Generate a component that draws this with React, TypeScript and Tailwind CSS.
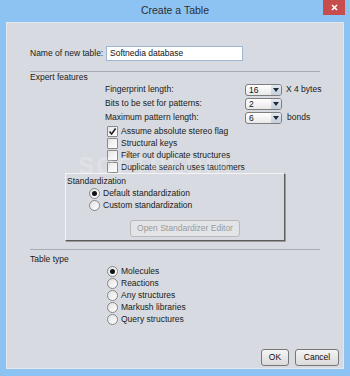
import React from "react";

const font = { fontFamily: '"Liberation Sans", Arial, sans-serif' };

function Combo({ value }: { value: string }) {
  return (
    <div className="flex h-[12px] w-[37px] items-stretch overflow-hidden rounded-[3px] border border-[#7d7d7d] bg-gradient-to-b from-[#ffffff] to-[#e9e9e9]">
      <div className="flex-1 pl-[3px] text-[8.5px] leading-[10px] text-[#111]">{value}</div>
      <div className="flex w-[10px] items-center justify-center bg-gradient-to-b from-[#e4e9f0] to-[#c5ceda]">
        <svg width="6" height="4" viewBox="0 0 6 4">
          <path d="M0 0 L6 0 L3 4 Z" fill="#1e2a38" />
        </svg>
      </div>
    </div>
  );
}

function Check({ checked, label }: { checked?: boolean; label: string }) {
  return (
    <div className="flex h-[12px] items-center">
      <div className="flex h-[11px] w-[11px] items-center justify-center rounded-[1px] border border-[#8a8a8a] bg-gradient-to-br from-[#e6e6e6] to-[#ffffff]">
        {checked && (
          <svg width="9" height="9" viewBox="0 0 9 9">
            <path d="M1.5 4.5 L3.6 7 L7.6 1.5" fill="none" stroke="#1d1d1d" strokeWidth="1.5" />
          </svg>
        )}
      </div>
      <span className="ml-[3px] text-[8.5px] leading-[12px] text-[#1a1a1a]">{label}</span>
    </div>
  );
}

function Radio({ checked, label }: { checked?: boolean; label: string }) {
  return (
    <div className="flex h-[12px] items-center">
      <div className="flex h-[11px] w-[11px] items-center justify-center rounded-full border border-[#878787] bg-gradient-to-br from-[#e2e2e2] to-[#ffffff]">
        {checked && <div className="h-[5px] w-[5px] rounded-full bg-[#111]" />}
      </div>
      <span className="ml-[3px] text-[8.5px] leading-[12px] text-[#1a1a1a]">{label}</span>
    </div>
  );
}

function Btn({ label, w, disabled }: { label: string; w: string; disabled?: boolean }) {
  return (
    <div
      className={`flex h-[17px] ${w} items-center justify-center rounded-[3px] border text-[8.5px] ${
        disabled
          ? "border-[#b9b9b9] bg-[#e3e4e7] text-[#9a9a9a]"
          : "border-[#777] bg-gradient-to-b from-[#f4f4f4] to-[#dadada] text-[#111]"
      }`}
    >
      {label}
    </div>
  );
}

export default function App() {
  return (
    <div className="relative flex h-[376px] w-[350px] flex-col bg-[#8cc3f3]" style={font}>
      {/* Title bar */}
      <div className="relative flex h-[22px] items-center justify-center">
        <span className="text-[10.5px] text-[#2e2e2e]">Create a Table</span>
        <div className="absolute right-[5px] top-0 flex h-[15px] w-[22px] items-center justify-center bg-[#c74d4d]">
          <svg width="7" height="7" viewBox="0 0 7 7">
            <path d="M1 1 L6 6 M6 1 L1 6" stroke="#fff" strokeWidth="1.6" />
          </svg>
        </div>
      </div>
      {/* Content */}
      <div className="mx-[6px] mb-[7px] flex flex-1 flex-col border border-[#e4e7ec] bg-[#d7dae0] pl-[23px] pr-[4px]">
        {/* Name row */}
        <div className="mt-[23px] flex h-[15px] items-center">
          <span className="w-[76px] text-[8.5px] text-[#1a1a1a]">Name of new table:</span>
          <div className="flex h-[15px] w-[137px] items-center border border-[#9fb6d2] bg-white pl-[3px] text-[8.5px] text-[#111]">
            Softnedia database
          </div>
        </div>
        <div className="mt-[10px] h-px w-[290px] bg-[#a7abb3]" />
        <div className="h-[11px] text-[8.5px] leading-[11px] text-[#1a1a1a]">Expert features</div>
        {/* Combos */}
        <div className="flex flex-col gap-[1px] pl-[75px]">
          <div className="flex h-[13px] items-center">
            <span className="w-[140px] text-[8.5px] text-[#1a1a1a]">Fingerprint length:</span>
            <Combo value="16" />
            <span className="ml-[4px] text-[8.5px] text-[#1a1a1a]">X 4 bytes</span>
          </div>
          <div className="flex h-[13px] items-center">
            <span className="w-[140px] text-[8.5px] text-[#1a1a1a]">Bits to be set for patterns:</span>
            <Combo value="2" />
          </div>
          <div className="flex h-[13px] items-center">
            <span className="w-[140px] text-[8.5px] text-[#1a1a1a]">Maximum pattern length:</span>
            <Combo value="6" />
            <span className="ml-[5px] text-[8.5px] text-[#1a1a1a]">bonds</span>
          </div>
        </div>
        {/* Checkboxes */}
        <div className="mt-[1px] flex flex-col pl-[77px]">
          <Check checked label="Assume absolute stereo flag" />
          <Check label="Structural keys" />
          <Check label="Filter out duplicate structures" />
          <Check label="Duplicate search uses tautomers" />
        </div>
        {/* Standardization group */}
        <div className="ml-[35px] flex h-[68px] w-[220px] flex-col border border-b-[#5c5c5c] border-l-[#f4f4f4] border-r-[#5c5c5c] border-t-[#f4f4f4] shadow-[1px_1px_0_#9a9a9a]">
          <div className="mt-[1px] h-[12px] pl-[1px] text-[8.5px] leading-[12px] text-[#1a1a1a]">Standardization</div>
          <div className="flex flex-col pl-[23px]">
            <Radio checked label="Default standardization" />
            <Radio label="Custom standardization" />
          </div>
          <div className="ml-[64px] mt-[9px]">
            <Btn label="Open Standardizer Editor" w="w-[110px]" disabled />
          </div>
        </div>
        <div className="mt-[8px] h-px w-[290px] bg-[#a7abb3]" />
        <div className="mt-[4px] h-[11px] text-[8.5px] leading-[11px] text-[#1a1a1a]">Table type</div>
        <div className="flex flex-col pl-[77px]">
          <Radio checked label="Molecules" />
          <Radio label="Reactions" />
          <Radio label="Any structures" />
          <Radio label="Markush libraries" />
          <Radio label="Query structures" />
        </div>
        <div className="mt-auto mb-[2px] flex justify-end gap-[6px]">
          <Btn label="OK" w="w-[28px]" />
          <Btn label="Cancel" w="w-[44px]" />
        </div>
      </div>
      {/* faint watermark */}
      <div className="pointer-events-none absolute left-[78px] top-[148px] text-[24px] font-bold tracking-[2px] text-white opacity-20">
        SOFTPEDIA
      </div>
    </div>
  );
}
